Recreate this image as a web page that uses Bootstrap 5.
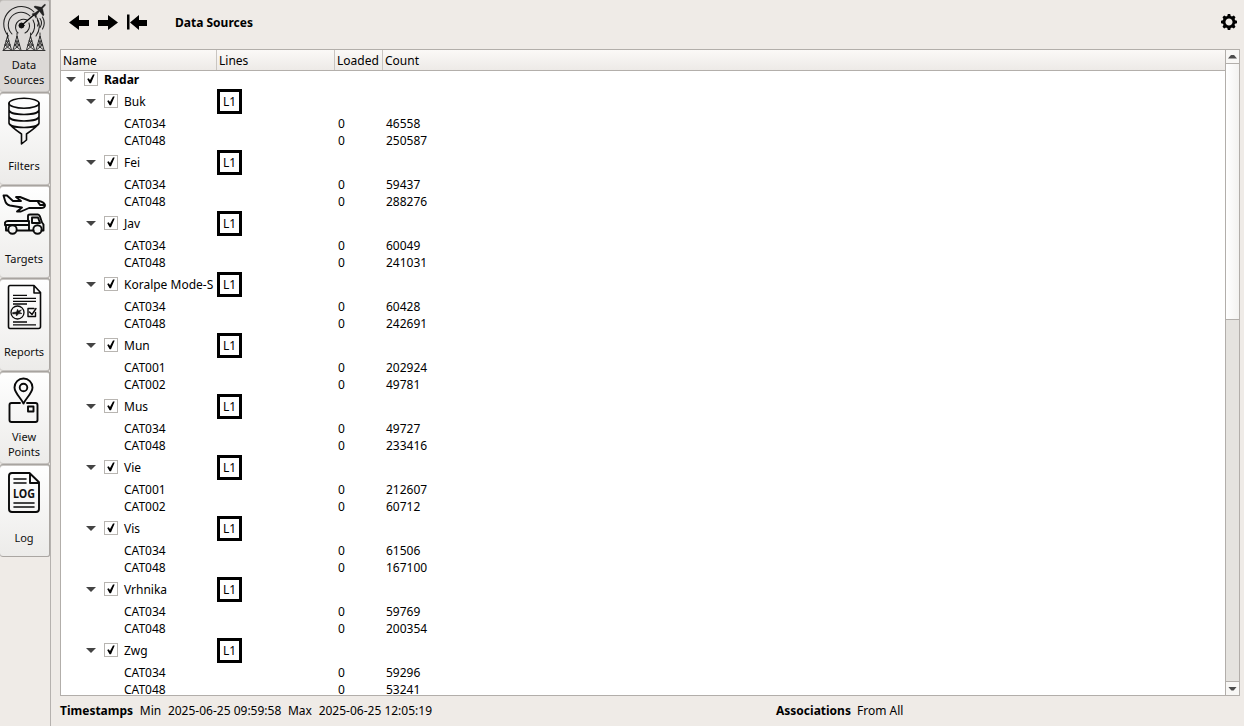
<!DOCTYPE html>
<html lang="en">
<head>
<meta charset="utf-8">
<title>Data Sources</title>
<link href="https://cdn.jsdelivr.net/npm/bootstrap@5.3.0/dist/css/bootstrap.min.css" rel="stylesheet">
<style>
body{font:12px/17px "Noto Sans",sans-serif;color:#000;background:#efebe7}
.side{width:51px;border-right:1px solid #b5b1ae}
.tool{width:50px;height:93px;font-size:11px;line-height:15px;color:#101010;background:linear-gradient(#fff,#ecebe9);border-radius:3px;box-shadow:inset 0 1px #a8a4a0,inset -1px 0 #aaa6a2,inset 0 2px #cbc8c5,inset 0 -1px #c8c5c2}
.tool:first-child{margin-top:-1px;background:#dcd9d7}
.tool:last-child{box-shadow:inset 0 1px #a8a4a0,inset -1px 0 #aaa6a2,inset 0 2px #cbc8c5,inset 0 -1px #aaa6a2}
.tool svg{display:block;width:50px;height:58px;fill:none;stroke:#0a0a0a;stroke-width:1.6;stroke-linejoin:round;stroke-linecap:round}
.tool svg.bold-lines{stroke-width:1.9}
.tool .caption{width:48px;height:30px}
.topbar{height:49px;padding-bottom:5px}
.topbar .page-name{margin-left:26px}
.topbar .gear{margin-right:6px}
.tree{margin:0 4px 0 9px;border:1px solid #b2aeaa;background:#fff;height:647px}
.cols{display:grid;grid-template-columns:156px 118px 48px 1fr}
.head{height:21px;line-height:22px;background:linear-gradient(#fbf9f7,#edeae7);border-bottom:1px solid #b3afab}
.head>div{height:20px;padding-left:2px;border-right:1px solid #c9c5c1}
.head>div:last-child{border-right:0}
.source{height:27px}
.group{height:17px}
.arrow{width:10px;height:5px;margin-right:8px;background:#444;clip-path:polygon(0 0,100% 0,50% 100%)}
.tick{width:14px;height:14px;margin:-1px 6px 0 0;border:1px solid #b8b5b1;background:#fff;flex:none}
.tick svg{display:block;width:12px;height:12px}
.line-tag{width:25px;height:25px;border:3px solid #000;line-height:19px;margin-top:1px}
.scroll{width:14px;border-left:1px solid #b2aeaa;background:#e5e3df}
.scroll .end{height:13px;background:#f8f7f5}
.scroll .end:last-child{height:14px;border-top:1px solid #b2aeaa}
.thumb{height:257px;background:linear-gradient(90deg,#fff,#f3f2f0);border:solid #b2aeaa;border-width:1px 0}
.tri{width:9px;height:4px;background:#4c4c4c;clip-path:polygon(0 0,100% 0,62% 100%,38% 100%)}
.tri.up{clip-path:polygon(38% 0,62% 0,100% 100%,0 100%)}
.status{padding:6px 0 0 9px}
.stamps{display:flex;gap:6.700px;width:716px;white-space:nowrap}
.stamps:last-child{width:auto;gap:6px}
</style>
</head>
<body class="vh-100 overflow-hidden d-flex">
<nav class="side flex-shrink-0">
  <div class="tool">
    <svg viewBox="0 0 50 58"><g stroke-width="1.050" stroke="#222"><path d="M8.500 37A17 17 0 0 1 34 13M37 19A17 17 0 0 1 36 37M12 35A12.500 12.500 0 0 1 30 17M33 21A12.500 12.500 0 0 1 31 36M18 34A8 8 0 0 1 27 21M29 24A8 8 0 0 1 25 34"/><path d="M37.500 27q2-3 0-6M40 28.500q3-4.500 0-9M42.500 30q3.500-6 0-12"/></g><circle cx="21.500" cy="26.500" r="2.500" fill="#111" stroke-width="1"/><path d="M22 26L35 15" stroke-width="1.300"/><path d="M34.300 14.500l4.200-3.200-4.500-3.300.8-1 6.500 1.300 3-2.800q1.500-.7 1 .8l-2.800 3L44 16l-1 .8-3.500-4.500-3.200 4 .2 2-.8.5-1.200-2.300-2.400-1 .6-1z" fill="#222" stroke-width=".4"/><g stroke-width=".9" stroke="#222"><path id="mast" d="M3.500 51L7.500 37l4 14M5 46l5.500 4.500M10 46l-5.500 4.500M6.300 42l3 4M8.700 42l-3 4M7.500 34v5M5 46h5M6.300 42h2.400"/><use href="#mast" x="9.500"/><use href="#mast" x="23"/><use href="#mast" x="32.500"/><path d="M3 51.500h42"/></g></svg>
    <div class="caption d-flex align-items-center justify-content-center text-center">Data<br>Sources</div>
  </div>
  <div class="tool">
    <svg viewBox="0 0 50 58"><ellipse cx="24" cy="11.300" rx="15" ry="5"/><path d="M9 11.300V31q1 3 12.500 11v10l5-4V42Q38 34 39 31V11.300M9 18c1 6 29 6 30 0M9 24.500c1 6 29 6 30 0M9 31c1 6 29 6 30 0"/></svg>
    <div class="caption d-flex align-items-center justify-content-center text-center">Filters</div>
  </div>
  <div class="tool">
    <svg class="bold-lines" viewBox="0 0 50 58"><path d="M3.500 10.500H7l6 5.500H21l-5-4h4l10 4h9q5 1 6 4 0 3-4 3H29l-8 3.500h-4l5-4-12-2q-4-1-5-5zM38 17l2 3h5"/><path d="M8 45.500H6V41l-1-1v-2.500q1-1.500 3-1.500h20V31q0-1.500 2-1.500h8q1 0 2 2l2 6 1.500 2v6h-2M17 45.500h16.500M29 36v9M6 40h22M32 32.500V38h8l-2-5.500z"/><circle cx="12.500" cy="44.500" r="4.200"/><circle cx="37.500" cy="44.500" r="4.200"/></svg>
    <div class="caption d-flex align-items-center justify-content-center text-center">Targets</div>
  </div>
  <div class="tool">
    <svg viewBox="0 0 50 58"><path d="M10 7.500h24l6.500 7v34q0 2-2 2H10q-1.500 0-1.500-2V9.500Q8.500 7.500 10 7.500zM34 8v7h6"/><path d="M13 17.300h14M13 20.300h23M13 23.300h23M13 26h14M13 44h14M13 46.800h23" stroke-width="1.300" stroke-linecap="butt"/><circle cx="17.500" cy="34.500" r="6.500" stroke-width="1.300"/><path d="M12.800 34.500l3.700-.5 1-2.800 1 1.800 3-1.200-2 2.400 2.500 1.300-3.500.3-2 2.200-.5-2.200-3.200.2z" fill="#111" stroke-width=".5"/><path d="M34 30.500h-6v8h7.500v-4M29.500 34l2.500 2.500 4-6" stroke-width="1.400"/></svg>
    <div class="caption d-flex align-items-center justify-content-center text-center">Reports</div>
  </div>
  <div class="tool">
    <svg class="bold-lines" viewBox="0 0 50 58"><path d="M20 32h-8.500q-2 0-2 2v15q0 2 2 2h24q2 0 2-2V34q0-2-2-2H27"/><path d="M23.500 32.500C21 27 14.500 22 14.500 16.500a9 9 0 0 1 18 0c0 5.500-6.500 10.500-9 16z"/><circle cx="23.500" cy="16.500" r="3.800"/><path d="M28 35.500h5.500v5H28z"/></svg>
    <div class="caption d-flex align-items-center justify-content-center text-center">View<br>Points</div>
  </div>
  <div class="tool">
    <svg class="bold-lines" viewBox="0 0 50 58"><path d="M12 9h17.500l9.500 9.300V45q0 3-3 3H12q-3 0-3-3V12q0-3 3-3zM30 10v9h8.500"/><path d="M14 15h12M14 19h12M14 39h20M14 43h20" stroke-width="1.600"/><text x="24" y="33.500" text-anchor="middle" textLength="22" lengthAdjust="spacingAndGlyphs" font-family="Noto Sans" font-weight="700" font-size="13" fill="#111" stroke="none">LOG</text></svg>
    <div class="caption d-flex align-items-center justify-content-center text-center">Log</div>
  </div>
</nav>
<main class="flex-grow-1">
  <header class="topbar d-flex align-items-center">
    <svg class="ms-3" width="82" height="18" viewBox="67 13 82 18"><path d="M69 22.500l10-7.500v5h10v6H79v4zM118 22.500l-10-7.500v5H98v6h10v4zM127 14.500h2.500v15H127zM130 22.500l9-7.500v5h8v6h-8v4z"/></svg>
    <b class="me-auto page-name">Data Sources</b>
    <svg class="gear" width="18" height="18" viewBox="-9 -9 18 18"><circle r="4.900" fill="none" stroke="#000" stroke-width="2.700"/><path id="t" d="M-2-5l.8-3h2.400l.8 3zM-2 5l.8 3h2.400l.8-3z"/><use href="#t" transform="rotate(45)"/><use href="#t" transform="rotate(90)"/><use href="#t" transform="rotate(135)"/></svg>
  </header>
  <section class="tree d-flex">
    <div class="flex-grow-1 overflow-hidden">
      <div class="head cols"><div>Name</div><div>Lines</div><div>Loaded</div><div>Count</div></div>
      <div id="rows"></div>
    </div>
    <div class="scroll d-flex flex-column">
      <div class="end d-flex align-items-center justify-content-center"><i class="tri up"></i></div>
      <div class="thumb"></div>
      <div class="end mt-auto d-flex align-items-center justify-content-center"><i class="tri"></i></div>
    </div>
  </section>
  <footer class="d-flex status">
    <div class="stamps"><b>Timestamps</b><span>Min</span><span>2025-06-25 09:59:58</span><span>Max</span><span>2025-06-25 12:05:19</span></div>
    <div class="stamps"><b>Associations</b><span>From All</span></div>
  </footer>
</main>
<script src="https://cdn.jsdelivr.net/npm/bootstrap@5.3.0/dist/js/bootstrap.bundle.min.js"></script>
<script>
const sources = [
  ["Buk", ["CAT034", 46558], ["CAT048", 250587]],
  ["Fei", ["CAT034", 59437], ["CAT048", 288276]],
  ["Jav", ["CAT034", 60049], ["CAT048", 241031]],
  ["Koralpe Mode-S", ["CAT034", 60428], ["CAT048", 242691]],
  ["Mun", ["CAT001", 202924], ["CAT002", 49781]],
  ["Mus", ["CAT034", 49727], ["CAT048", 233416]],
  ["Vie", ["CAT001", 212607], ["CAT002", 60712]],
  ["Vis", ["CAT034", 61506], ["CAT048", 167100]],
  ["Vrhnika", ["CAT034", 59769], ["CAT048", 200354]],
  ["Zwg", ["CAT034", 59296], ["CAT048", 53241]]
];
const tick = '<i class="tick"><svg viewBox="0 0 12 12"><path d="M2.200 6l1.500-.8 1.300 1.800L8 1.500h1.700L6 10.300H4.600z"/></svg></i>';
const node = (name, pad) => `<div class="d-flex align-items-center text-nowrap" style="padding-left:${pad}px"><i class="arrow"></i>${tick}<span>${name}</span></div>`;
let html = `<div class="cols group fw-bold">${node("Radar", 5)}</div>`;
for (const [name, ...cats] of sources) {
  html += `<div class="cols source">${node(name, 25)}<div><div class="line-tag text-center">L1</div></div></div>`;
  for (const [cat, count] of cats)
    html += `<div class="cols group"><div style="padding-left:63px">${cat}</div><div></div><div style="padding-left:3px">0</div><div style="padding-left:3px">${count}</div></div>`;
}
document.getElementById("rows").innerHTML = html;
</script>
</body>
</html>
